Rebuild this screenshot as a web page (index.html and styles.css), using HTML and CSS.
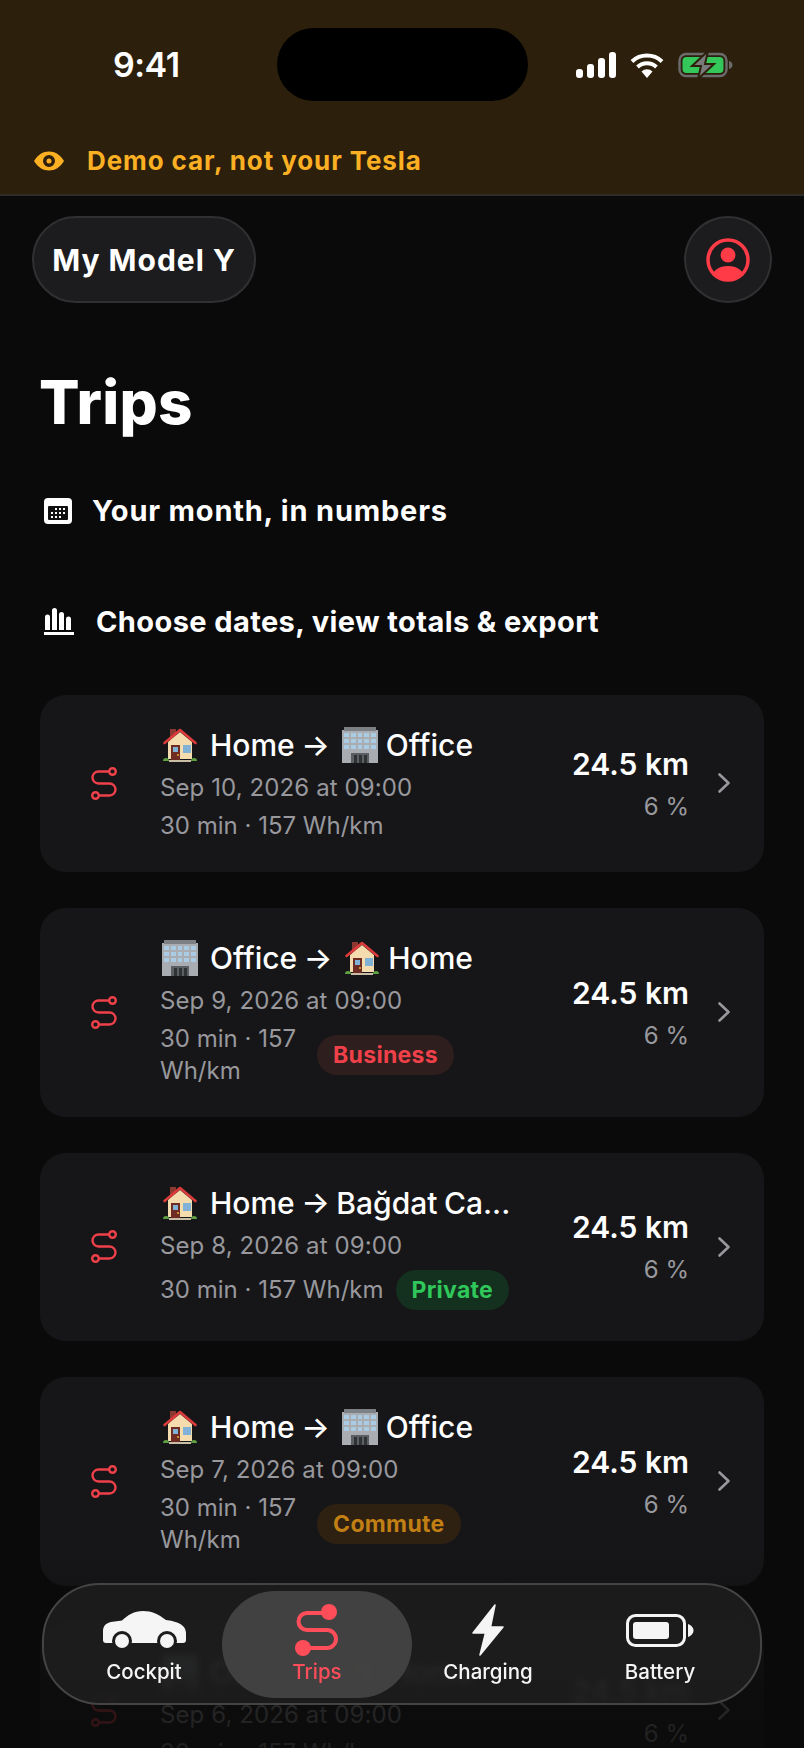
FILE: index.html
```html
<!DOCTYPE html>
<html lang="en">
    <head>
        <meta charset="UTF-8" />
        <meta name="viewport" content="width=device-width, initial-scale=1.0" />
        <title>Trips</title>
        <link rel="stylesheet" href="styles.css">
    </head>

    <body>
        <svg class="sprite" width="0" height="0">
            <defs>
                <symbol id="route" viewBox="0 0 26 33">
                    <g fill="none" stroke="currentColor" stroke-width="2.4" stroke-linecap="round">
                        <circle cx="21.5" cy="4.5" r="3.3" />
                        <circle cx="4.5" cy="28.5" r="3.3" />
                        <path d="M18 4.500H7.500a6 6 0 0 0 0 12h11a6 6 0 0 1 0 12H8" />
                    </g>
                </symbol>
                <symbol id="house" viewBox="0 0 36 36">
                    <path fill="#8c3a30" d="M8 2h6v8l-6 6z" />
                    <path fill="#f4dcae" d="M6 15 18 5l12 10v17H6z" />
                    <path fill="none" stroke="#dd3b3b" stroke-width="2.600" stroke-linecap="round" stroke-linejoin="round" d="M2.500 16 18 3l15.500 13" />
                    <path fill="#6e2c22" d="M9 18h9v15H9z" />
                    <path fill="#7fb2d6" d="M11 20h5v5h-5zM21 18h8v8h-8z" />
                    <circle cx="16" cy="28" r="1" fill="#e8b23a" />
                    <path fill="#5fa042" d="M1 34a3 3 0 0 1 6 0zM29 34a3 3 0 0 1 6 0z" />
                    <path fill="#c9bda6" d="M7 33h22v2H7z" />
                </symbol>
                <symbol id="office" viewBox="0 0 36 36">
                    <path fill="#a9adb2" d="M0 3h36v33H0z" />
                    <path fill="#7d8186" d="M2 0h32v4H2z" />
                    <path fill="#a9cbe4" d="M2 6h5v4H2zM9 6h5v4H9zM16 6h4v4h-4zM22 6h5v4h-5zM29 6h5v4h-5zM2 12h5v4H2zM9 12h5v4H9zM16 12h4v4h-4zM22 12h5v4h-5zM29 12h5v4h-5zM2 18h5v4H2zM9 18h5v4H9zM16 18h4v4h-4zM22 18h5v4h-5zM29 18h5v4h-5z" />
                    <path fill="#5b5e62" d="M9 26h18v10H9z" />
                    <path fill="#303234" d="M12 28h3v8h-3zM17 28h3v8h-3zM22 28h3v8h-3z" />
                </symbol>
                <symbol id="chevron" viewBox="0 0 14 22">
                    <path fill="none" stroke="currentColor" stroke-width="2.600" stroke-linecap="round" stroke-linejoin="round" d="M2.500 2.500 11.500 11l-9 8.500" />
                </symbol>
            </defs>
        </svg>

        <div class="page">
            <header class="banner">
                <div class="status">
                    <span class="clock">9:41</span>
                    <div class="island"></div>
                    <div class="status-icons">
                        <svg width="40" height="26" viewBox="0 0 40 26">
                            <rect x="0" y="17" width="7" height="9" rx="3" fill="#fff" />
                            <rect x="11" y="12" width="7" height="14" rx="3" fill="#fff" />
                            <rect x="22" y="6" width="7" height="20" rx="3" fill="#fff" />
                            <rect x="33" y="0" width="7" height="26" rx="3" fill="#fff" />
                        </svg>
                        <svg width="34" height="26" viewBox="0 0 34 26">
                            <path fill="none" stroke="#fff" stroke-width="4" d="M2 9.500a22 22 0 0 1 30 0M7.500 15a14 14 0 0 1 19 0" />
                            <path fill="#fff" d="M11.500 19.500a8 8 0 0 1 11 0L17 26z" />
                        </svg>
                        <svg width="55" height="28" viewBox="0 0 55 28">
                            <rect x="1.500" y="3" width="47" height="22" rx="6.500" fill="none" stroke="#6b6b6b" stroke-width="2.400" />
                            <rect x="4.500" y="6" width="41" height="16" rx="4" fill="#34c759" />
                            <path fill="#6b6b6b" d="M51 10c2 .5 3.500 2 3.500 4s-1.500 3.500-3.500 4z" />
                            <path fill="#7a7a7a" stroke="#2c1f0b" stroke-width="2" d="M30 0 14 15h9l-3 13 16-15h-9z" />
                        </svg>
                    </div>
                </div>
                <div class="demo">
                    <svg width="30" height="20" viewBox="0 0 30 20">
                        <path fill="#fbb024" fill-rule="evenodd" d="M0 10C4 3.500 9 .5 15 .5S26 3.500 30 10c-4 6.500-9 9.500-15 9.500S4 16.500 0 10zm15-6a6 6 0 1 0 0 12 6 6 0 0 0 0-12z" />
                        <circle cx="15" cy="10" r="2.500" fill="#fbb024" />
                    </svg>
                    <span>Demo car, not your Tesla</span>
                </div>
            </header>

            <main class="content">
                <div class="topbar">
                    <button class="car-pill">My Model Y</button>
                    <button class="avatar">
                        <svg width="44" height="44" viewBox="0 0 44 44">
                            <defs>
                                <clipPath id="ring"><circle cx="22" cy="22" r="20" /></clipPath>
                            </defs>
                            <circle cx="22" cy="22" r="20" fill="none" stroke="#ff3b47" stroke-width="3.500" />
                            <circle cx="22" cy="17" r="7.500" fill="#ff3b47" />
                            <ellipse cx="22" cy="39" rx="16" ry="11" fill="#ff3b47" clip-path="url(#ring)" />
                        </svg>
                    </button>
                </div>

                <h1 class="title">Trips</h1>

                <a class="link link-month" href="#">
                    <svg width="28" height="26" viewBox="0 0 28 26">
                        <rect width="28" height="26" rx="4" fill="#fff" />
                        <rect x="4" y="8" width="20" height="14" rx="1" fill="#111" />
                        <path fill="#fff" d="M11 10h2v2h-2zM15 10h2v2h-2zM19 10h2v2h-2zM7 14h2v2H7zM11 14h2v2h-2zM15 14h2v2h-2zM19 14h2v2h-2zM7 18h2v2H7zM11 18h2v2h-2zM15 18h2v2h-2z" />
                    </svg>
                    <span>Your month, in numbers</span>
                </a>
                <a class="link link-export" href="#">
                    <svg width="32" height="27" viewBox="0 0 32 27">
                        <path fill="#fff" d="M1 9a2.500 2.500 0 0 1 5 0v13H1zM8 2.500a2.500 2.500 0 0 1 5 0V22H8zM15 6.500a2.500 2.500 0 0 1 5 0V22h-5zM22 11a2.500 2.500 0 0 1 5 0v11h-5zM0 24h30v3H0z" />
                    </svg>
                    <span>Choose dates, view totals &amp; export</span>
                </a>

                <div class="trips">
                    <div class="trip">
                        <svg class="trip-icon"><use href="#route" /></svg>
                        <div class="trip-main">
                            <div class="trip-title">
                                <svg class="emoji"><use href="#house" /></svg> Home → <svg class="emoji"><use href="#office" /></svg> Office
                            </div>
                            <div class="trip-date">Sep 10, 2026 at 09:00</div>
                            <div class="trip-meta"><span>30 min · 157 Wh/km</span></div>
                        </div>
                        <div class="trip-nums"><strong>24.5 km</strong><span>6 %</span></div>
                        <svg class="chevron"><use href="#chevron" /></svg>
                    </div>

                    <div class="trip">
                        <svg class="trip-icon"><use href="#route" /></svg>
                        <div class="trip-main">
                            <div class="trip-title">
                                <svg class="emoji"><use href="#office" /></svg> Office → <svg class="emoji"><use href="#house" /></svg> Home
                            </div>
                            <div class="trip-date">Sep 9, 2026 at 09:00</div>
                            <div class="trip-meta trip-meta-wrapped"><span>30 min · 157<br>Wh/km</span><em class="tag tag-business">Business</em></div>
                        </div>
                        <div class="trip-nums"><strong>24.5 km</strong><span>6 %</span></div>
                        <svg class="chevron"><use href="#chevron" /></svg>
                    </div>

                    <div class="trip">
                        <svg class="trip-icon"><use href="#route" /></svg>
                        <div class="trip-main">
                            <div class="trip-title">
                                <svg class="emoji"><use href="#house" /></svg> Home → Bağdat Ca...
                            </div>
                            <div class="trip-date">Sep 8, 2026 at 09:00</div>
                            <div class="trip-meta"><span>30 min · 157 Wh/km</span><em class="tag tag-private">Private</em></div>
                        </div>
                        <div class="trip-nums"><strong>24.5 km</strong><span>6 %</span></div>
                        <svg class="chevron"><use href="#chevron" /></svg>
                    </div>

                    <div class="trip">
                        <svg class="trip-icon"><use href="#route" /></svg>
                        <div class="trip-main">
                            <div class="trip-title">
                                <svg class="emoji"><use href="#house" /></svg> Home → <svg class="emoji"><use href="#office" /></svg> Office
                            </div>
                            <div class="trip-date">Sep 7, 2026 at 09:00</div>
                            <div class="trip-meta trip-meta-wrapped"><span>30 min · 157<br>Wh/km</span><em class="tag tag-commute">Commute</em></div>
                        </div>
                        <div class="trip-nums"><strong>24.5 km</strong><span>6 %</span></div>
                        <svg class="chevron"><use href="#chevron" /></svg>
                    </div>

                    <div class="trip">
                        <svg class="trip-icon"><use href="#route" /></svg>
                        <div class="trip-main">
                            <div class="trip-title">
                                <svg class="emoji"><use href="#office" /></svg> Office → <svg class="emoji"><use href="#house" /></svg> Home
                            </div>
                            <div class="trip-date">Sep 6, 2026 at 09:00</div>
                            <div class="trip-meta"><span>30 min · 157 Wh/km</span></div>
                        </div>
                        <div class="trip-nums"><strong>24.5 km</strong><span>6 %</span></div>
                        <svg class="chevron"><use href="#chevron" /></svg>
                    </div>
                </div>
            </main>

            <div class="fade"></div>

            <nav class="tabbar">
                <a class="tab" href="#">
                    <span class="tab-icon">
                        <svg width="83" height="38" viewBox="0 0 83 38">
                            <path fill="#f5f5f5" d="M0 20c0-5 3-8 8-9l11-1.500C25 4 31 0 40 0c9 0 15 3 23 9 9 1 20 4 20 13v7c0 2-1 3-3 3H3c-2 0-3-1-3-3z" />
                            <circle cx="19" cy="30" r="10" fill="#1c1c1c" />
                            <circle cx="64" cy="30" r="10" fill="#1c1c1c" />
                            <circle cx="19" cy="30" r="7" fill="#f5f5f5" />
                            <circle cx="64" cy="30" r="7" fill="#f5f5f5" />
                        </svg>
                    </span>
                    <span>Cockpit</span>
                </a>
                <a class="tab tab-active" href="#">
                    <span class="tab-icon">
                        <svg width="44" height="52" viewBox="0 0 44 52">
                            <circle cx="34" cy="8" r="8" fill="currentColor" />
                            <circle cx="8" cy="44" r="8" fill="currentColor" />
                            <path fill="none" stroke="currentColor" stroke-width="4" d="M30 9H12a8.500 8.500 0 0 0 0 17h20a9 9 0 0 1 0 18H10" />
                        </svg>
                    </span>
                    <span>Trips</span>
                </a>
                <a class="tab" href="#">
                    <span class="tab-icon">
                        <svg width="33" height="52" viewBox="0 0 33 52">
                            <path fill="#f5f5f5" stroke="#f5f5f5" stroke-width="1.500" stroke-linejoin="round" d="M23 1 1 29h12.500L8 51l23-28H18.500z" />
                        </svg>
                    </span>
                    <span>Charging</span>
                </a>
                <a class="tab" href="#">
                    <span class="tab-icon">
                        <svg width="68" height="33" viewBox="0 0 68 33">
                            <rect x="1.500" y="1.500" width="57" height="30" rx="8" fill="none" stroke="#f5f5f5" stroke-width="3" />
                            <rect x="7" y="8" width="36" height="17" rx="3" fill="#f5f5f5" />
                            <path fill="#f5f5f5" d="M62 10c3 1 5.500 3.500 5.500 6.500S65 22 62 23z" />
                        </svg>
                    </span>
                    <span>Battery</span>
                </a>
            </nav>
        </div>
    </body>
</html>
```

FILE: styles.css
```css
html,
body {
    margin: 0;
    padding: 0;
    overflow: hidden;
}

body {
    color: #fff;
    background: #0a0a0a;
    font-family: Inter, "Liberation Sans", sans-serif;
}

.sprite {
    position: absolute;
}

.page {
    position: relative;
    width: 804px;
    height: 1748px;
    overflow: hidden;
}

/* top banner */
.banner {
    height: 194px;
    background: #2c1f0b;
    border-bottom: 2px solid #2e2c28;
}

.status {
    display: flex;
    align-items: center;
    height: 73px;
    padding: 28px 71px 0 113px;
}

.clock {
    width: 164px;
    font-size: 34px;
    font-weight: 600;
    letter-spacing: -0.5px;
}

.island {
    width: 251px;
    height: 73px;
    border-radius: 37px;
    background: #000;
}

.status-icons {
    display: flex;
    align-items: center;
    gap: 14px;
    margin-left: 48px;
}

.demo {
    display: flex;
    align-items: center;
    gap: 23px;
    margin-top: 44px;
    padding-left: 34px;
    color: #fbb024;
    font-size: 26px;
    font-weight: 700;
    letter-spacing: 0.9px;
}

/* page content */
.content {
    padding: 20px 40px 0;
}

.topbar {
    display: flex;
    justify-content: space-between;
    margin: 0 -8px;
}

.car-pill,
.avatar {
    height: 87px;
    background: #1c1c1e;
    border: 2px solid #303032;
    color: #fff;
    font-family: inherit;
}

.car-pill {
    width: 224px;
    padding: 0;
    border-radius: 44px;
    font-size: 30px;
    font-weight: 700;
    letter-spacing: 1px;
}

.avatar {
    display: flex;
    align-items: center;
    justify-content: center;
    width: 88px;
    padding: 0;
    border-radius: 50%;
}

.title {
    margin: 64px 0 0 -1px;
    font-size: 60px;
    line-height: 70px;
    font-weight: 800;
    letter-spacing: 0.3px;
}

.link {
    display: flex;
    align-items: center;
    color: #fff;
    font-size: 29px;
    font-weight: 700;
    text-decoration: none;
}

.link svg {
    flex: none;
    margin-left: 4px;
}

.link-month {
    gap: 20px;
    margin-top: 56px;
    letter-spacing: 0.8px;
}

.link-export {
    gap: 20px;
    margin-top: 76px;
    letter-spacing: 0.4px;
}

/* trip cards */
.trips {
    display: flex;
    flex-direction: column;
    gap: 36px;
    margin-top: 56px;
}

.trip {
    display: flex;
    align-items: center;
    padding: 29px 33px 30px 51px;
    border-radius: 26px;
    background: #161618;
}

.trip-icon {
    flex: none;
    width: 26px;
    height: 33px;
    margin-right: 43px;
    color: #f0404a;
}

.trip-main {
    flex: 1;
    min-width: 0;
}

.trip-title {
    display: flex;
    align-items: center;
    gap: 12px;
    height: 42px;
    font-size: 30px;
    font-weight: 500;
    white-space: nowrap;
    word-spacing: -1.5px;
}

.emoji {
    flex: none;
    width: 36px;
    height: 36px;
    margin-right: -4px;
}

.trip-title .emoji:first-child {
    margin: 0 0 0 2px;
}

.trip-date {
    margin-top: 4px;
    color: #98989d;
    font-size: 24px;
    letter-spacing: 0.1px;
    line-height: 36px;
}

.trip-meta {
    display: flex;
    align-items: center;
    gap: 12px;
    margin-top: 4px;
    color: #98989d;
    font-size: 24px;
    line-height: 32px;
    white-space: nowrap;
}

.trip-meta-wrapped {
    gap: 21px;
}

.tag {
    margin: 1.5px 0;
    padding: 0 16px;
    border-radius: 20px;
    font-size: 23px;
    font-style: normal;
    font-weight: 700;
    letter-spacing: 0.3px;
    line-height: 40px;
}

.tag-business {
    color: #f0404a;
    background: #2e1e1d;
}

.tag-private {
    color: #30c85a;
    background: #14301f;
}

.tag-commute {
    color: #c17f14;
    background: #2e2112;
}

.trip-nums {
    display: flex;
    flex-direction: column;
    align-items: flex-end;
    gap: 10px;
    color: #98989d;
    font-size: 24px;
}

.trip-nums strong {
    color: #fff;
    font-size: 30px;
    font-weight: 600;
}

.chevron {
    flex: none;
    width: 14px;
    height: 22px;
    margin-left: 28px;
    color: #98989d;
}

/* dark fade behind the tab bar */
.fade {
    position: absolute;
    left: 0;
    right: 0;
    bottom: 0;
    height: 198px;
    background: linear-gradient(rgba(10, 10, 10, 0), rgba(10, 10, 10, 0.8) 75%, rgba(10, 10, 10, 0.85));
}

/* floating tab bar */
.tabbar {
    position: absolute;
    left: 42px;
    top: 1583px;
    display: grid;
    grid-template-columns: repeat(4, 172px);
    box-sizing: border-box;
    width: 720px;
    height: 122px;
    padding: 6px 14px;
    border: 2px solid #444;
    border-radius: 58px;
    background: rgba(30, 30, 30, 0.86);
    backdrop-filter: blur(3px);
}

.tab {
    display: flex;
    flex-direction: column;
    align-items: center;
    gap: 4px;
    height: 107px;
    padding-top: 13px;
    box-sizing: border-box;
    border-radius: 54px;
    color: #f5f5f5;
    font-size: 20.500px;
    font-weight: 500;
    line-height: 24px;
    text-decoration: none;
}

.tab-icon {
    display: flex;
    align-items: center;
    height: 52px;
}

.tab-active {
    margin: 0 -10px 0 -8px;
    color: #ff4d5a;
    background: rgba(70, 70, 70, 0.9);
}
```
